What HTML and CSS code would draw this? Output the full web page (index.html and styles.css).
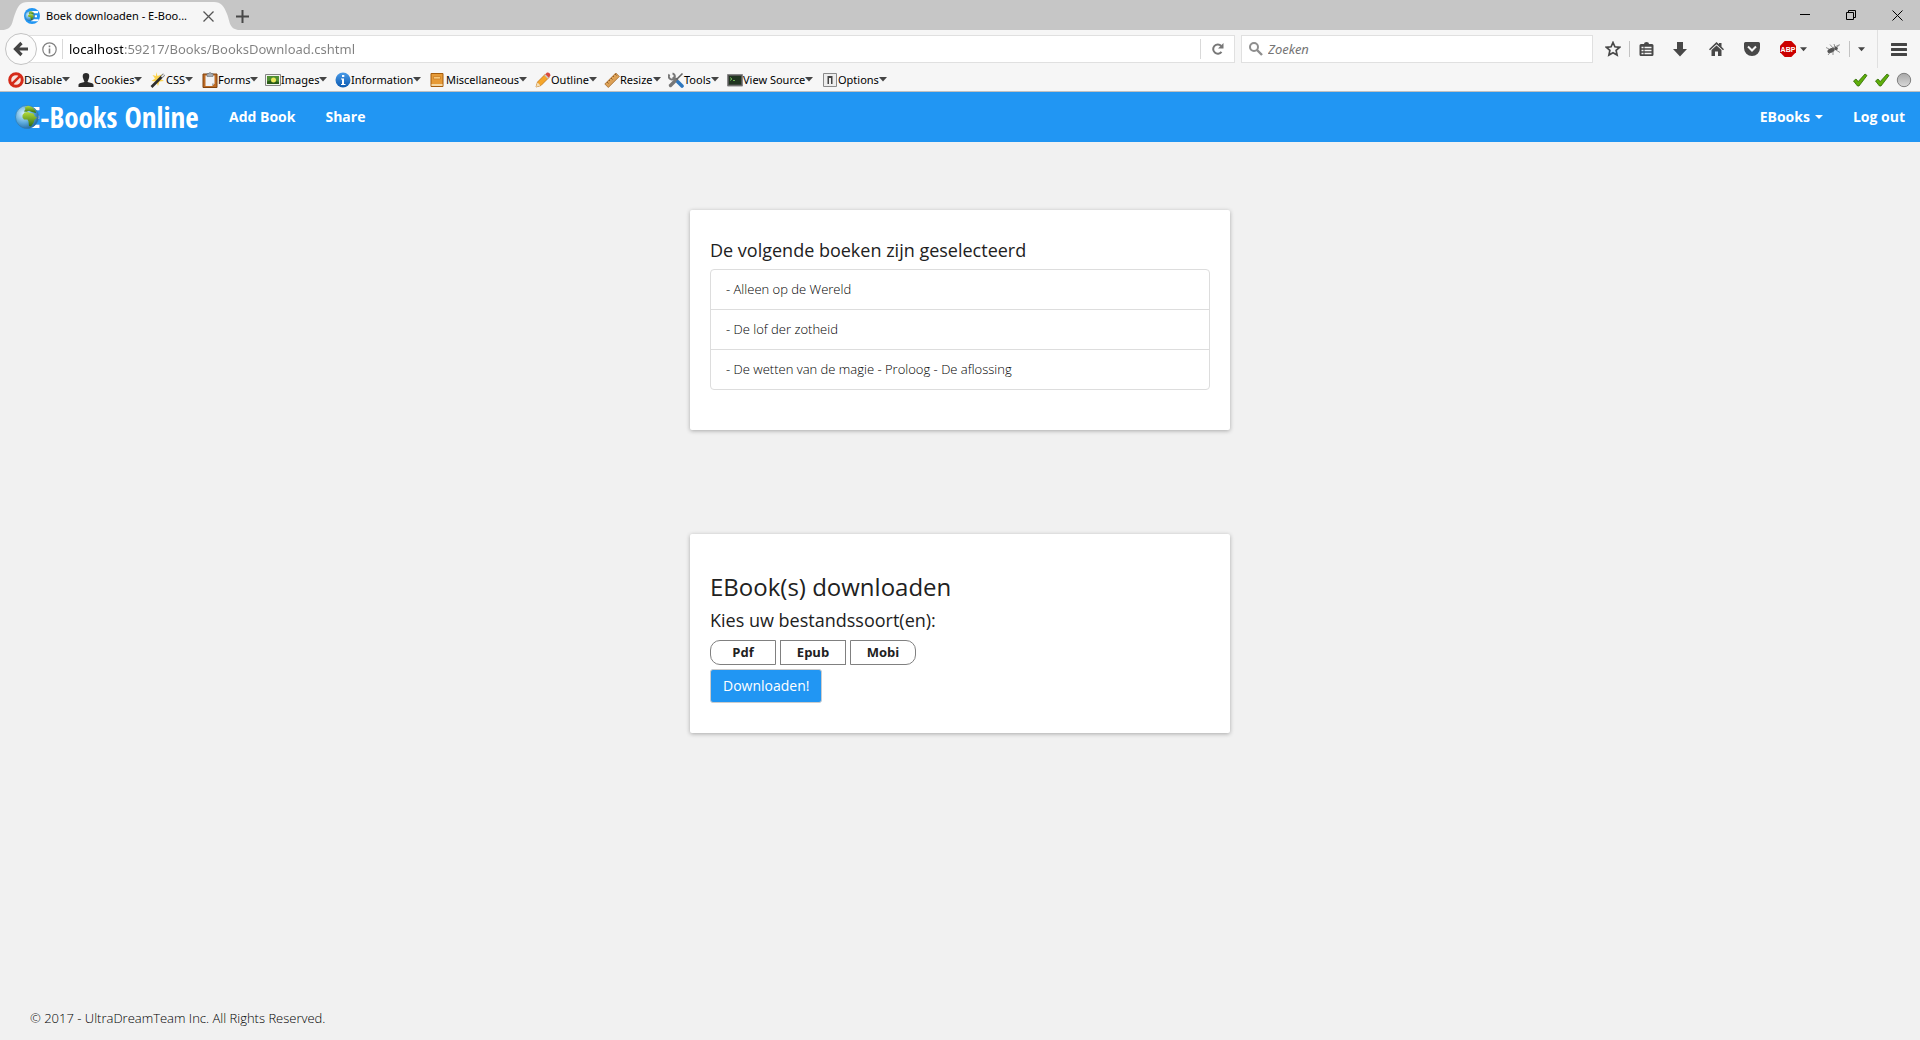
FILE: index.html
```html
<!DOCTYPE html>
<html lang="nl">
<head>
<meta charset="utf-8">
<title>Boek downloaden - E-Books Online</title>
<meta name="viewport" content="width=device-width, initial-scale=1">
<link rel="stylesheet" href="styles.css">
</head>
<body>
<svg class="defs" width="0" height="0" aria-hidden="true">
  <defs>
    <radialGradient id="sea" cx="35%" cy="35%" r="75%"><stop offset="0" stop-color="#d4f0ff"/><stop offset=".55" stop-color="#5aa9dc"/><stop offset="1" stop-color="#1b5c96"/></radialGradient>
    <linearGradient id="land" x2="0" y2="1"><stop offset="0" stop-color="#b5dc3c"/><stop offset="1" stop-color="#2f6d10"/></linearGradient>
    <linearGradient id="grey" x2="0" y2="1"><stop offset="0" stop-color="#a8a8a8"/><stop offset="1" stop-color="#d8d8d8"/></linearGradient>
    <linearGradient id="info" x2="0" y2="1"><stop offset="0" stop-color="#4a9be8"/><stop offset="1" stop-color="#0b59b0"/></linearGradient>
    <symbol id="globe" viewBox="0 0 24 24">
      <circle cx="12" cy="12" r="11.500" fill="url(#sea)" stroke="#2f79ad" stroke-width=".6"/>
      <path d="M7.500 10 9.500 7.500 13 7 15 8 18.500 8.500 20 11.500 22 12.500 19.500 15 18.500 18 16 21.500 14 21 13.500 16.500 12.500 14.500 9 14.500 7.500 12.500Z" fill="url(#land)"/>
      <path d="M9 6.500 10.500 4 9.500 2.500 13 .8 17 2 20.500 5.500 21 8 17 7 14 5.800 11.500 6.800Z" fill="url(#land)"/>
    </symbol>
    <symbol id="caret" viewBox="0 0 8 5"><path d="M0 0h8L4 4.500Z" fill="currentColor"/></symbol>
    <symbol id="tick" viewBox="0 0 16 14"><path d="M1.500 8 4 6l2.200 2.600L13 1l2 1.500L7 13H5.500Z" fill="#5fae0b" stroke="#2c6a00" stroke-width=".8"/></symbol>
  </defs>
</svg>

<header class="browser">
  <div class="titlebar">
    <div class="tab">
      <svg class="tab-shape" viewBox="0 0 240 30" aria-hidden="true"><path d="M2 30C13 30 12 21 15 14C18 6 20 2 28 2H214C221 2 224 6 227 14C230 21 229 30 240 30Z" fill="#f6f6f6"/></svg>
      <svg class="icon" viewBox="0 0 16 16" aria-hidden="true"><circle cx="8" cy="8" r="8" fill="#2196f3"/><path d="M7 3h7v2.200h-4v2h3v2h-3v2h4.500v2H7Z" fill="#fff"/><svg x="1" y="3" width="10" height="10"><use href="#globe"/></svg></svg>
      <span class="tab-title">Boek downloaden - E-Boo...</span>
      <button class="plain" aria-label="Tabblad sluiten"><svg width="11" height="11" viewBox="0 0 11 11"><path d="m.5.5 10 10m0-10-10 10" stroke="#555" stroke-width="1.300"/></svg></button>
    </div>
    <button class="plain new-tab" aria-label="Nieuw tabblad"><svg width="13" height="13" viewBox="0 0 13 13"><path d="M6.500 0v13M0 6.500h13" stroke="#484848" stroke-width="2"/></svg></button>
    <div class="window-controls">
      <button class="plain" aria-label="Minimaliseren"><svg width="10" height="10" viewBox="0 0 10 10"><path d="M0 4.500h10" stroke="#000"/></svg></button>
      <button class="plain" aria-label="Verkleinen"><svg width="10" height="10" viewBox="0 0 10 10"><path d="M.5 2.500h7v7h-7ZM2.500 2.500v-2h7v7h-2" fill="none" stroke="#000"/></svg></button>
      <button class="plain" aria-label="Sluiten"><svg width="11" height="11" viewBox="0 0 11 11"><path d="m.5.5 10 10m0-10-10 10" stroke="#000"/></svg></button>
    </div>
  </div>

  <div class="navigation">
    <button class="plain back" aria-label="Terug"><svg width="16" height="16" viewBox="0 0 16 16"><path d="M15 8H3M8.500 2 2.500 8l6 6" fill="none" stroke="#444" stroke-width="3.200"/></svg></button>
    <div class="address">
      <button class="plain" aria-label="Site-informatie"><svg width="15" height="15" viewBox="0 0 15 15"><circle cx="7.500" cy="7.500" r="6.700" fill="none" stroke="#808080" stroke-width="1.200"/><path d="M7.500 6.500V11.500M7.500 3.500v1.800" stroke="#808080" stroke-width="1.600"/></svg></button>
      <input class="url" type="text" aria-label="Adres" value="localhost:59217/Books/BooksDownload.cshtml">
      <button class="plain reload" aria-label="Vernieuwen"><svg width="12" height="12" viewBox="0 0 12 12"><path d="M9.500 8.800A4.600 4.600 0 1 1 9.200 3" fill="none" stroke="#777" stroke-width="2"/><path d="M11.500 0v5.500H6Z" fill="#777"/></svg></button>
    </div>
    <label class="search"><svg width="14" height="14" viewBox="0 0 14 14" aria-hidden="true"><circle cx="5" cy="5" r="4" fill="none" stroke="#8e8e8e" stroke-width="2"/><path d="m8 8 5 5" stroke="#8e8e8e" stroke-width="2.400"/></svg><input type="search" aria-label="Zoeken" placeholder="Zoeken"></label>
    <div class="actions">
      <button class="plain" aria-label="Bladwijzer"><svg width="16" height="16" viewBox="0 0 16 16"><path d="m8 1.500 1.900 4.300 4.700.5-3.500 3.100 1 4.700L8 11.700l-4.100 2.400 1-4.700L1.400 6.300l4.700-.5Z" fill="none" stroke="#484848" stroke-width="1.700"/></svg></button>
      <i class="rule"></i>
      <button class="plain" aria-label="Bladwijzers tonen"><svg width="15" height="15" viewBox="0 0 15 15"><path d="M5 2a2.500 2 0 0 1 5 0h3a1.500 1.500 0 0 1 1.500 1.500v9A1.500 1.500 0 0 1 13 14H2a1.500 1.500 0 0 1-1.500-1.500v-9A1.500 1.500 0 0 1 2 2Z" fill="#484848"/><path d="M2.500 5.500h2m1 0h7m-10 3h2m1 0h7m-10 3h2m1 0h7" stroke="#f6f6f6" stroke-width="1.600"/></svg></button>
      <button class="plain wide" aria-label="Downloads"><svg width="14" height="15" viewBox="0 0 14 15"><path d="M4 0h6v7h4l-7 7.500L0 7h4Z" fill="#484848"/></svg></button>
      <button class="plain wide" aria-label="Startpagina"><svg width="15" height="14" viewBox="0 0 15 14"><path d="M0 7.200 7.500 0l2.500 2.300V1h2.500v3.700L15 7.200l-1 1.100L7.500 2.200 1 8.300ZM2.500 8l5-4.600 5 4.600v6H9V9.500H6V14H2.500Z" fill="#484848"/></svg></button>
      <button class="plain wide" aria-label="Pocket"><svg width="16" height="14" viewBox="0 0 16 14"><path d="M1.500 0h13A1.500 1.500 0 0 1 16 1.500V6A8 8 0 0 1 0 6V1.500A1.500 1.500 0 0 1 1.500 0Z" fill="#484848"/><path d="m4 4.500 4 4 4-4" fill="none" stroke="#f6f6f6" stroke-width="2"/></svg></button>
      <button class="plain abp" aria-label="Adblock Plus"><svg width="16" height="16" viewBox="0 0 16 16"><path d="M4.700 0h6.600L16 4.700v6.600L11.300 16H4.700L0 11.300V4.700Z" fill="#cb0000"/><text class="abp-text" x="8" y="11" text-anchor="middle">ABP</text></svg><svg class="caret" width="7" height="5"><use href="#caret"/></svg></button>
      <button class="plain" aria-label="Firebug"><svg width="16" height="13" viewBox="0 0 16 13"><g fill="#555"><ellipse cx="6" cy="7.500" rx="3.800" ry="2.300" transform="rotate(-25 6 7.500)"/><circle cx="11" cy="5.500" r="1.800"/></g><path d="M4 6 1 4.500M8 5 5 1.500M10 4 9 1m3 3 3-2.500M5 9.500 3 12m5-3.500L8 12m3-5 4 2.500M7 5l7-3" stroke="#888" stroke-width=".9"/></svg></button>
      <i class="rule"></i>
      <button class="plain overflow" aria-label="Meer"><svg class="caret" width="7" height="5"><use href="#caret"/></svg></button>
      <i class="rule tall"></i>
      <button class="plain menu" aria-label="Menu"><svg width="16" height="13" viewBox="0 0 16 13"><path d="M1 1.500h14M1 6.500h14M1 11.500h14" stroke="#444" stroke-width="3" stroke-linecap="round"/></svg></button>
    </div>
  </div>

  <div class="devbar">
    <button class="plain"><svg class="icon" viewBox="0 0 16 16"><circle cx="8" cy="8" r="6.300" fill="#f8e5df" stroke="#d52b1a" stroke-width="3"/><path d="m3.800 12.200 8.400-8.400" stroke="#d52b1a" stroke-width="2.600"/></svg>Disable<svg class="caret" width="8" height="5"><use href="#caret"/></svg></button>
    <button class="plain"><svg class="icon" viewBox="0 0 16 16"><path d="M8 1c3.500 0 3.600 3 3 5S9.600 9 9.600 10c2 .5 5.900 1 5.900 3v2H.5v-2c0-2 3.900-2.500 5.900-3C6.400 9 5.500 8 5 6s-.5-5 3-5Z" fill="#2b2b2b"/></svg>Cookies<svg class="caret" width="8" height="5"><use href="#caret"/></svg></button>
    <button class="plain"><svg class="icon" viewBox="0 0 16 16"><path d="M6 0 7.500 4 12 2.500 10 6.500l4 2.500-4.500.5L8 14 6 9.500 1.500 9 5 6.500 2.500 3 6 4Z" fill="#fbd34e"/><path d="M1.500 15 14 2.500" stroke="#2e2e2e" stroke-width="2.600"/><path d="m11.500 5 2.500-2.500" stroke="#ddd" stroke-width="2"/></svg>CSS<svg class="caret" width="8" height="5"><use href="#caret"/></svg></button>
    <button class="plain"><svg class="icon" viewBox="0 0 16 16"><path d="M1 2h14v13.500H1Z" fill="#bd6b25" stroke="#81430e"/><path d="M3.500 3.500h9v8l-2.500 2.500H3.500Z" fill="#f2f3f5"/><path d="M12.500 11.500H10V14Z" fill="#aaa"/><path d="M5 1.500h2a1 1 0 0 1 2 0h2v3H5Z" fill="#a7acb2" stroke="#6d7379" stroke-width=".6"/></svg>Forms<svg class="caret" width="8" height="5"><use href="#caret"/></svg></button>
    <button class="plain"><svg class="icon" viewBox="0 0 16 16"><path d="M.5 2.500h15v11H.5Z" fill="#f3f3ee" stroke="#858585"/><path d="M2 4h12v8H2Z" fill="#4f8f32"/><path d="M2 9.500 7 8l7 2v2H2Z" fill="#295a16"/><circle cx="8.500" cy="8" r="2.500" fill="#ebe75a"/></svg>Images<svg class="caret" width="8" height="5"><use href="#caret"/></svg></button>
    <button class="plain"><svg class="icon" viewBox="0 0 16 16"><circle cx="8" cy="8" r="7.500" fill="url(#info)"/><path d="M6 6.500h3V12h1.500v1H6v-1h1V7.500H6ZM7 3h2.300v2H7Z" fill="#fff"/></svg>Information<svg class="caret" width="8" height="5"><use href="#caret"/></svg></button>
    <button class="plain"><svg class="icon" viewBox="0 0 16 16"><path d="M1 1.500h12v13H1Z" fill="#e69a36" stroke="#a65d0c"/><path d="M1.500 12h11v2h-11Z" fill="#f4d7a4"/><path d="M3.500 4.500h7v2.500h-7Z" fill="#f8c777" stroke="#c77920" stroke-width=".7"/></svg>Miscellaneous<svg class="caret" width="8" height="5"><use href="#caret"/></svg></button>
    <button class="plain"><svg class="icon" viewBox="0 0 16 16"><path d="m1 15 1.500-5 8-8 3.500 3.500-8 8Z" fill="#f5a62b" stroke="#b76a0c" stroke-width=".7"/><path d="m10 2.500 2-2q3-.5 3.500 3L13.500 6Z" fill="#d94b3f"/><path d="m9.300 3.200 1-1 3.500 3.500-1 1Z" fill="#ccc"/><path d="m1 15 1.500-4.500L5.500 13.500Z" fill="#f5dfb8"/></svg>Outline<svg class="caret" width="8" height="5"><use href="#caret"/></svg></button>
    <button class="plain"><svg class="icon" viewBox="0 0 16 16"><path d="m.8 12 11-11 3.500 3.500-11 11Z" fill="#dda156" stroke="#a2682a" stroke-width=".8"/><path d="m3 10 1.500 1.500M5 8l1 1m1-3 1.500 1.500M9 4l1 1m1-3 1.500 1.500" stroke="#7e4e1d" stroke-width=".8"/></svg>Resize<svg class="caret" width="8" height="5"><use href="#caret"/></svg></button>
    <button class="plain"><svg class="icon" viewBox="0 0 16 16"><path d="m5 5 5 5" stroke="#777" stroke-width="2.400"/><path d="M1.500 2.500a3 3 0 1 0 3-1" fill="none" stroke="#777" stroke-width="2"/><path d="m2.500 13.500 6-6" stroke="#777" stroke-width="3.400" stroke-linecap="round"/><path d="m8.500 7.500 6-6" stroke="#666" stroke-width="1.600"/><path d="m10 10 4 4" stroke="#2e77be" stroke-width="3.600" stroke-linecap="round"/></svg>Tools<svg class="caret" width="8" height="5"><use href="#caret"/></svg></button>
    <button class="plain"><svg class="icon" viewBox="0 0 16 16"><path d="M.5 2.500h15v11.500H.5Z" fill="#555" stroke="#888"/><path d="M2 4h12v8.500H2Z" fill="#203420"/><path d="m3 5.500 2 1.500-2 1.500M6 8.500h2" fill="none" stroke="#76c35b" stroke-width=".9"/></svg>View Source<svg class="caret" width="8" height="5"><use href="#caret"/></svg></button>
    <button class="plain"><svg class="icon" viewBox="0 0 16 16"><path d="M1.500 1.500h13v13h-13Z" fill="#ededed" stroke="#8a8a8a"/><path d="M5.500 4h5v8h-5Z" fill="#444"/><path d="M7 6h2v6H7Z" fill="#eee"/></svg>Options<svg class="caret" width="8" height="5"><use href="#caret"/></svg></button>
    <div class="status">
      <svg width="16" height="14"><use href="#tick"/></svg>
      <svg width="16" height="14"><use href="#tick"/></svg>
      <svg width="16" height="16" viewBox="0 0 16 16"><circle cx="8" cy="8" r="6.700" fill="url(#grey)" stroke="#7f7f7f"/></svg>
    </div>
  </div>
</header>

<nav class="navbar">
  <a class="brand" href="#"><svg width="24" height="26" viewBox="0 0 24 24" aria-hidden="true"><use href="#globe"/></svg><span>E-Books Online</span></a>
  <a href="#">Add Book</a>
  <a href="#">Share</a>
  <a class="right" href="#">EBooks <svg width="8" height="4" viewBox="0 0 8 4"><path d="M0 0h8L4 4Z" fill="#fff"/></svg></a>
  <a href="#">Log out</a>
</nav>

<main>
  <section class="card">
    <h4>De volgende boeken zijn geselecteerd</h4>
    <ul class="books">
      <li>- Alleen op de Wereld</li>
      <li>- De lof der zotheid</li>
      <li>- De wetten van de magie - Proloog - De aflossing</li>
    </ul>
  </section>
  <form class="card download">
    <h3>EBook(s) downloaden</h3>
    <h4>Kies uw bestandssoort(en):</h4>
    <div class="formats">
      <label><input type="checkbox" name="pdf">Pdf</label>
      <label><input type="checkbox" name="epub">Epub</label>
      <label><input type="checkbox" name="mobi">Mobi</label>
    </div>
    <button class="submit" type="button">Downloaden!</button>
  </form>
</main>

<footer>© 2017 - UltraDreamTeam Inc. All Rights Reserved.</footer>
</body>
</html>
```
FILE: styles.css
```css
* { box-sizing: border-box; }

body {
  margin: 0;
  min-height: 100vh;
  display: flex;
  flex-direction: column;
  background: #f1f1f1;
  color: #000;
  font: 300 13px/18px "Open Sans", "Noto Sans", sans-serif;
}

svg { display: block; flex: none; }
.defs { position: absolute; }
.icon { width: 16px; height: 16px; }
.caret { color: #444; }

.plain {
  display: flex;
  align-items: center;
  justify-content: center;
  padding: 0;
  border: 0;
  background: none;
  color: #000;
  font: inherit;
}

/* Browser window */
.browser {
  background: #f6f6f6;
  border-bottom: 1px solid #c0c0c0;
  color: #000;
  font: 400 12px/16px "Noto Sans", "Open Sans", sans-serif;
}

.titlebar {
  display: flex;
  align-items: center;
  height: 30px;
  background: #c6c6c6;
}

.tab {
  position: relative;
  display: flex;
  align-items: center;
  width: 240px;
  height: 30px;
  padding: 2px 26px 0 24px;
  font-size: 11px;
}
.tab > * { position: relative; }
.tab .tab-shape { position: absolute; inset: 0; }
.tab-title { flex: 1; padding-left: 6px; white-space: nowrap; }
.new-tab { margin-left: -4px; padding-top: 2px; }

.window-controls { display: flex; margin-left: auto; }
.window-controls button { width: 46px; height: 28px; }

.navigation {
  display: flex;
  align-items: center;
  height: 38px;
  padding-left: 5px;
}
.back {
  position: relative;
  width: 32px;
  height: 32px;
  border: 1px solid #c3c3c3;
  border-radius: 50%;
  background: #fbfbfb;
}
.address, .search {
  display: flex;
  align-items: center;
  height: 28px;
  border: 1px solid #e0e0e0;
  background: #fff;
}
.address { flex: 1; margin: 0 6px 0 -8px; padding-left: 12px; }
.url, .search input {
  flex: 1;
  min-width: 0;
  border: 0;
  outline: 0;
  font: inherit;
}
.url {
  margin-left: 5px;
  padding: 0 0 0 6px;
  height: 20px;
  border-left: 1px solid #d9d9d9;
  background: linear-gradient(90deg, #000 60px, #808080 60px);
  background-clip: text;
  -webkit-text-fill-color: transparent;
  font-size: 13px;
}
.reload { width: 34px; height: 20px; border-left: 1px solid #d9d9d9; }
.search { width: 352px; gap: 5px; padding-left: 7px; }
.search input { padding: 0; font-size: 13px; font-style: italic; }
.search input::placeholder { color: #757575; opacity: 1; }

.actions { display: flex; align-items: center; height: 38px; padding-left: 4px; }
.actions button { width: 32px; height: 28px; }
.actions .wide { width: 36px; }
.actions .abp { width: 47px; gap: 4px; }
.actions .overflow { width: 23px; }
.actions .menu { width: 42px; }
.rule { width: 1px; height: 16px; background: #c3c3c3; }
.rule.tall { height: 38px; margin-left: 4px; background: #e0e0e0; }
.abp-text { fill: #fff; font: 700 7px "Liberation Sans", sans-serif; }

.devbar {
  display: grid;
  grid-template-columns: 70px 72px 52px 63px 70px 95px 105px 69px 64px 59px 95px 70px 1fr;
  align-items: center;
  height: 23px;
  padding: 0 8px;
}
.devbar button { justify-content: flex-start; white-space: nowrap; font-size: 11px; }
.status { display: flex; align-items: center; justify-content: flex-end; gap: 6px; }

/* Site navigation */
.navbar {
  display: flex;
  align-items: center;
  height: 50px;
  background: #2196f3;
}
.navbar a {
  display: flex;
  align-items: center;
  gap: 5px;
  padding: 0 15px;
  color: #fff;
  font-size: 14px;
  font-weight: 700;
  line-height: 20px;
  text-decoration: none;
}
.navbar .brand {
  gap: 0;
  width: 214px;
  padding: 0 0 0 15px;
  font: 800 29px/50px "Open Sans Condensed", "Roboto Condensed", "Noto Sans Condensed", "Liberation Sans", sans-serif;
  white-space: nowrap;
}
.brand svg { position: relative; z-index: 1; }
.brand span { margin-left: -11px; }
.navbar .right { margin-left: auto; }

/* Page content */
main {
  display: flex;
  flex-direction: column;
  align-items: center;
  gap: 104px;
  padding: 68px 15px;
}
.card {
  width: 100%;
  max-width: 540px;
  padding: 30px 20px 40px;
  border-radius: 2px;
  background: #fff;
  box-shadow: 0 1px 4px rgba(0, 0, 0, .3);
}
h3, h4 { margin: 0; color: #212121; font-weight: 400; }
h3 { font-size: 24px; line-height: 26px; }
h4 { font-size: 18px; line-height: 20px; }

.books {
  margin: 9px 0 0;
  padding: 0;
  border: 1px solid #ddd;
  border-radius: 4px;
  list-style: none;
}
.books li { padding: 10px 15px; line-height: 19px; }
.books li + li { border-top: 1px solid #ddd; }

.download { padding: 40px 20px 30px; }
.download h4 { margin: 10px 0; }
.formats { display: flex; gap: 4px; margin-bottom: 4px; }
.formats label {
  width: 66px;
  border: 1px solid #808080;
  color: #212121;
  font-weight: 700;
  line-height: 23px;
  text-align: center;
}
.formats label:first-child { border-radius: 10px 0 0 10px; }
.formats label:last-child { border-radius: 0 10px 10px 0; }
.formats input { position: absolute; appearance: none; margin: 0; }
.submit {
  padding: 6px 12px;
  border: 1px solid #ccc;
  border-radius: 3px;
  background: #2196f3;
  color: #fff;
  font: 400 14px/20px "Open Sans", "Noto Sans", sans-serif;
}

footer { margin-top: auto; padding: 0 30px 13px; }
```
